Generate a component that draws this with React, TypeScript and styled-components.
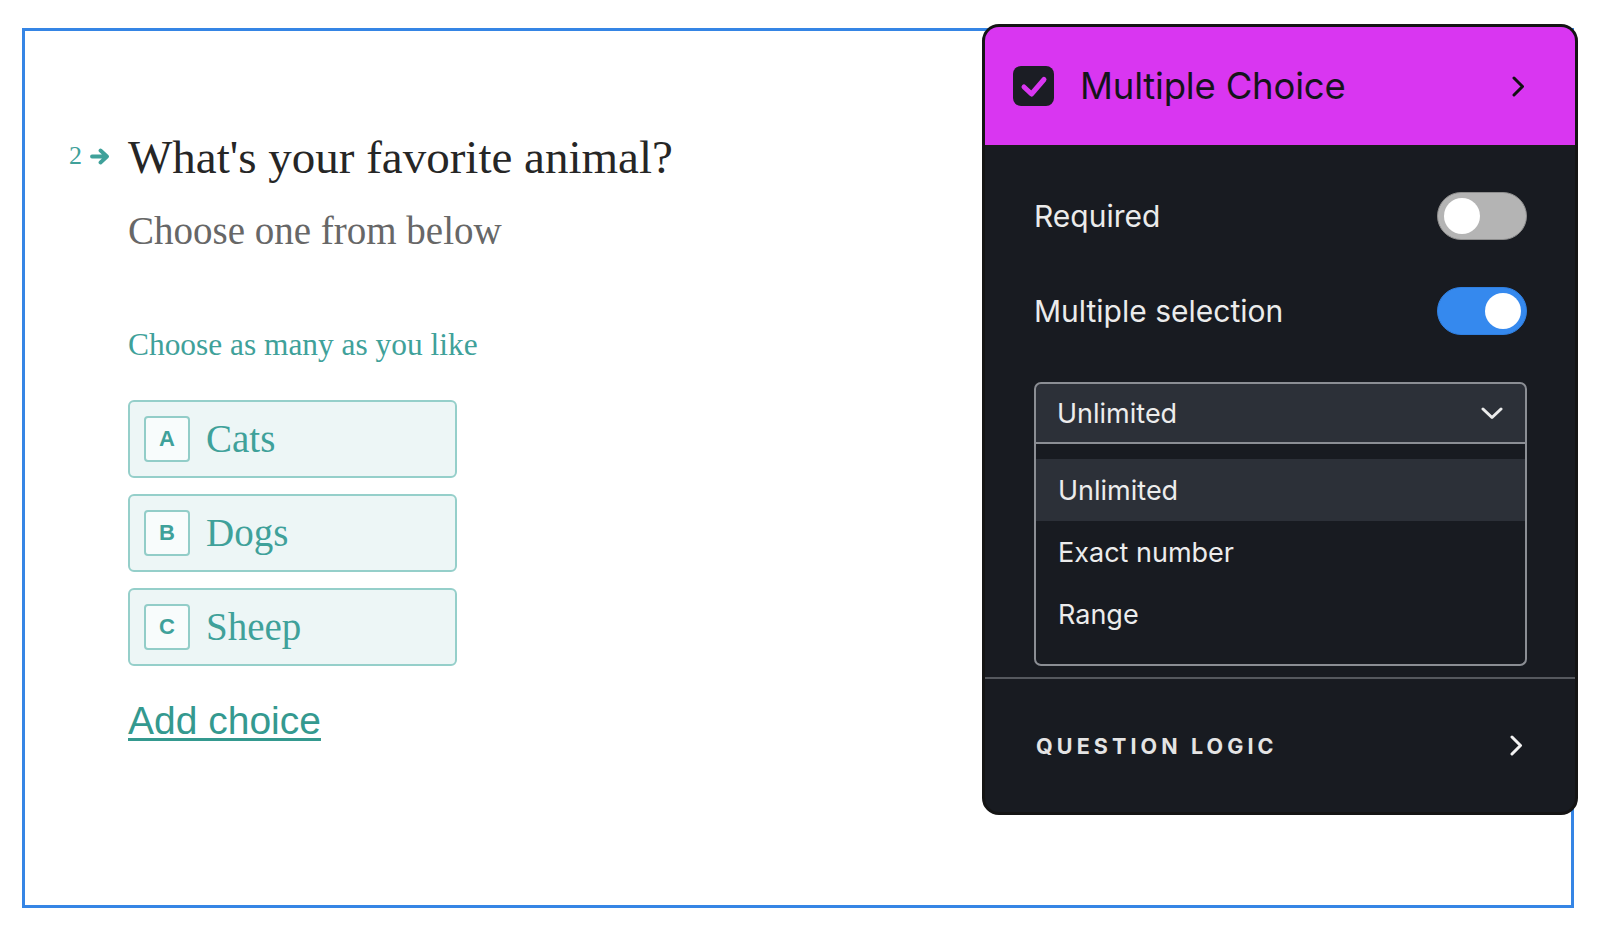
import React from "react";
import styled, { createGlobalStyle } from "styled-components";

const GlobalStyle = createGlobalStyle`
  html, body {
    margin: 0;
    padding: 0;
    background: #ffffff;
  }
  * { box-sizing: border-box; }
`;

const TEAL = "#3fa19a";
const SERIF = `"Liberation Serif", "Times New Roman", serif`;
const SANS = `Inter, "Noto Sans", sans-serif`;

const Page = styled.div`
  position: relative;
  width: 1600px;
  height: 942px;
  padding: 28px 0 0 22px;
  overflow: hidden;
`;

const Frame = styled.div`
  width: 1552px;
  height: 880px;
  border: 3px solid #3585e5;
  padding: 98px 0 0 44px;
  display: flex;
  align-items: flex-start;
`;

const Prefix = styled.div`
  display: flex;
  align-items: center;
  gap: 8px;
  height: 30px;
  margin-top: 12px;
  margin-right: 18px;
  font-family: ${SERIF};
  font-size: 26px;
  line-height: 30px;
  color: ${TEAL};
`;

const QuestionBlock = styled.div`
  display: flex;
  flex-direction: column;
  align-items: flex-start;
`;

const Title = styled.div`
  font-family: ${SERIF};
  font-size: 47px;
  line-height: 56px;
  color: #262626;
  white-space: nowrap;
`;

const Subtitle = styled.div`
  margin-top: 23px;
  font-family: ${SERIF};
  font-size: 39px;
  line-height: 46px;
  color: #676767;
  white-space: nowrap;
`;

const Hint = styled.div`
  margin-top: 73px;
  font-family: ${SERIF};
  font-size: 31.4px;
  line-height: 36px;
  color: ${TEAL};
  white-space: nowrap;
`;

const Choices = styled.div`
  margin-top: 37px;
  display: flex;
  flex-direction: column;
  gap: 16px;
`;

const Choice = styled.div`
  width: 329px;
  height: 78px;
  display: flex;
  align-items: center;
  gap: 16px;
  padding-left: 14px;
  background: #edf6f6;
  border: 2px solid #95cfca;
  border-radius: 6px;
`;

const Key = styled.div`
  width: 46px;
  height: 46px;
  display: flex;
  align-items: center;
  justify-content: center;
  background: #f8fcfc;
  border: 2px solid #92cdc8;
  border-radius: 4px;
  font-family: "Liberation Sans", Arial, sans-serif;
  font-weight: 700;
  font-size: 22px;
  color: ${TEAL};
`;

const ChoiceText = styled.span`
  font-family: ${SERIF};
  font-size: 39px;
  line-height: 44px;
  color: ${TEAL};
`;

const AddChoice = styled.a`
  margin-top: 33px;
  font-family: "Liberation Sans", Arial, sans-serif;
  font-size: 39px;
  line-height: 44px;
  color: #34998f;
  text-decoration: underline;
  text-decoration-thickness: 3px;
  text-underline-offset: 4px;
  cursor: pointer;
`;

/* ---------- Panel ---------- */

const Panel = styled.div`
  position: absolute;
  left: 982px;
  top: 24px;
  width: 596px;
  height: 791px;
  border: 3px solid #141414;
  border-radius: 17px;
  background: #181b21;
  overflow: hidden;
  font-family: ${SANS};
  display: flex;
  flex-direction: column;
`;

const Header = styled.div`
  height: 119px;
  flex: none;
  background: #d936f1;
  display: flex;
  align-items: center;
  padding: 0 50px 0 28px;
  border-bottom: 1px solid #1b1b1b;
`;

const HeaderTitle = styled.div`
  flex: 1;
  margin-left: 26px;
  font-size: 36.5px;
  line-height: 42px;
  color: #14141a;
  letter-spacing: -0.2px;
`;

const Body = styled.div`
  padding: 46px 48px 0 49px;
  display: flex;
  flex-direction: column;
`;

const SettingRow = styled.div`
  display: flex;
  align-items: center;
  justify-content: space-between;
  height: 48px;
  margin-bottom: 47px;
`;

const SettingLabel = styled.span`
  font-size: 30px;
  color: #ebebeb;
`;

const Toggle = styled.div<{ $on?: boolean }>`
  position: relative;
  width: 90px;
  height: 48px;
  border-radius: 24px;
  background: ${(p) => (p.$on ? "#3589ee" : "#b4b4b4")};
  border: 1px solid ${(p) => (p.$on ? "#2f7fe0" : "#8d8d8d")};
  flex: none;
`;

const Knob = styled.span<{ $on?: boolean }>`
  position: absolute;
  top: 5px;
  left: ${(p) => (p.$on ? "47px" : "6px")};
  width: 36px;
  height: 36px;
  border-radius: 50%;
  background: #ffffff;
`;

const SelectBox = styled.div`
  height: 62px;
  display: flex;
  align-items: center;
  justify-content: space-between;
  padding: 0 22px 0 21px;
  background: #2c3038;
  border: 2px solid #8b8e94;
  border-radius: 7px 7px 0 0;
  font-size: 27px;
  color: #ececec;
`;

const OptionList = styled.div`
  border: 2px solid #8b8e94;
  border-top: none;
  border-radius: 0 0 7px 7px;
  padding: 15px 0 19px;
  background: #181b21;
`;

const Option = styled.div<{ $active?: boolean }>`
  height: 62px;
  display: flex;
  align-items: center;
  padding-left: 22px;
  font-size: 27px;
  color: #ececec;
  background: ${(p) => (p.$active ? "#2c3038" : "transparent")};
`;

const Divider = styled.div`
  margin-top: 11px;
  height: 2px;
  background: #55585e;
  flex: none;
`;

const Footer = styled.div`
  flex: 1;
  display: flex;
  align-items: center;
  justify-content: space-between;
  padding: 0 52px 0 51px;
`;

const FooterLabel = styled.span`
  font-size: 21.5px;
  font-weight: 700;
  letter-spacing: 4.1px;
  color: #e4e4e4;
`;

const CheckIcon = () => (
  <svg width="41" height="40" viewBox="0 0 41 40">
    <rect x="0" y="0" width="41" height="40" rx="8" fill="#1b1d24" />
    <path
      d="M11 21 L18.5 28 L31 13.5"
      fill="none"
      stroke="#d936f1"
      strokeWidth="5"
      strokeLinecap="round"
      strokeLinejoin="round"
    />
  </svg>
);

const ChevronRight = ({ color, size = 21 }: { color: string; size?: number }) => (
  <svg width={size * 0.6} height={size} viewBox="0 0 12.6 21">
    <path
      d="M2 2 L10.5 10.5 L2 19"
      fill="none"
      stroke={color}
      strokeWidth="3"
      strokeLinecap="round"
      strokeLinejoin="round"
    />
  </svg>
);

const ChevronDown = () => (
  <svg width="22" height="13" viewBox="0 0 22 13">
    <path
      d="M2 2 L11 10.5 L20 2"
      fill="none"
      stroke="#ececec"
      strokeWidth="3"
      strokeLinecap="round"
      strokeLinejoin="round"
    />
  </svg>
);

const Arrow = () => (
  <svg width="20" height="17" viewBox="0 0 20 17">
    <path
      d="M2 8.5 H16.5 M10.5 2.5 L17 8.5 L10.5 14.5"
      fill="none"
      stroke={TEAL}
      strokeWidth="3.8"
      strokeLinecap="round"
      strokeLinejoin="round"
    />
  </svg>
);

const choices = [
  { key: "A", label: "Cats" },
  { key: "B", label: "Dogs" },
  { key: "C", label: "Sheep" },
];

export default function App() {
  return (
    <>
      <GlobalStyle />
      <Page>
        <Frame>
          <Prefix>
            <span>2</span>
            <Arrow />
          </Prefix>
          <QuestionBlock>
            <Title>What's your favorite animal?</Title>
            <Subtitle>Choose one from below</Subtitle>
            <Hint>Choose as many as you like</Hint>
            <Choices>
              {choices.map((c) => (
                <Choice key={c.key}>
                  <Key>{c.key}</Key>
                  <ChoiceText>{c.label}</ChoiceText>
                </Choice>
              ))}
            </Choices>
            <AddChoice>Add choice</AddChoice>
          </QuestionBlock>
        </Frame>

        <Panel>
          <Header>
            <CheckIcon />
            <HeaderTitle>Multiple Choice</HeaderTitle>
            <ChevronRight color="#111111" />
          </Header>
          <Body>
            <SettingRow>
              <SettingLabel>Required</SettingLabel>
              <Toggle>
                <Knob />
              </Toggle>
            </SettingRow>
            <SettingRow>
              <SettingLabel>Multiple selection</SettingLabel>
              <Toggle $on>
                <Knob $on />
              </Toggle>
            </SettingRow>
            <SelectBox>
              <span>Unlimited</span>
              <ChevronDown />
            </SelectBox>
            <OptionList>
              <Option $active>Unlimited</Option>
              <Option>Exact number</Option>
              <Option>Range</Option>
            </OptionList>
          </Body>
          <Divider />
          <Footer>
            <FooterLabel>QUESTION LOGIC</FooterLabel>
            <ChevronRight color="#f2f2f2" />
          </Footer>
        </Panel>
      </Page>
    </>
  );
}
